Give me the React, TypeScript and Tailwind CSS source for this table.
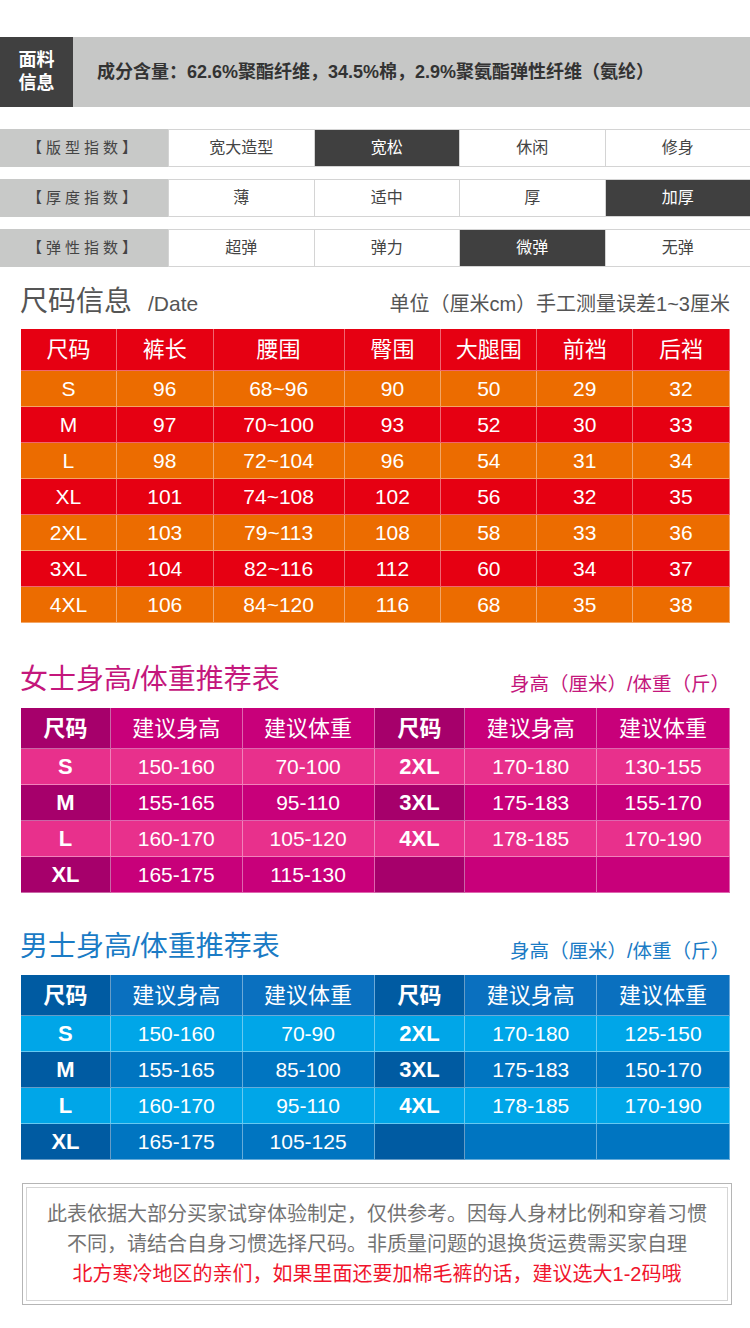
import React from "react";

const FONT = { fontFamily: '"Liberation Sans", "Noto Sans CJK SC", sans-serif' };

const indexRows = [
  { label: "【版型指数】", opts: ["宽大造型", "宽松", "休闲", "修身"], active: 1 },
  { label: "【厚度指数】", opts: ["薄", "适中", "厚", "加厚"], active: 3 },
  { label: "【弹性指数】", opts: ["超弹", "弹力", "微弹", "无弹"], active: 2 },
];

const sizeHead = ["尺码", "裤长", "腰围", "臀围", "大腿围", "前裆", "后裆"];
const sizeRows = [
  ["S", "96", "68~96", "90", "50", "29", "32"],
  ["M", "97", "70~100", "93", "52", "30", "33"],
  ["L", "98", "72~104", "96", "54", "31", "34"],
  ["XL", "101", "74~108", "102", "56", "32", "35"],
  ["2XL", "103", "79~113", "108", "58", "33", "36"],
  ["3XL", "104", "82~116", "112", "60", "34", "37"],
  ["4XL", "106", "84~120", "116", "68", "35", "38"],
];
const sizeCols = ["w-[96px]", "w-[97px]", "w-[131px]", "w-[97px]", "w-[96px]", "w-[96px]", "w-[97px]"];

const recCols = ["w-[90px]", "w-[132px]", "w-[132px]", "w-[91px]", "w-[132px]", "w-[133px]"];
const recHead = ["尺码", "建议身高", "建议体重", "尺码", "建议身高", "建议体重"];

const womenRows = [
  ["S", "150-160", "70-100", "2XL", "170-180", "130-155"],
  ["M", "155-165", "95-110", "3XL", "175-183", "155-170"],
  ["L", "160-170", "105-120", "4XL", "178-185", "170-190"],
  ["XL", "165-175", "115-130", "", "", ""],
];
const menRows = [
  ["S", "150-160", "70-90", "2XL", "170-180", "125-150"],
  ["M", "155-165", "85-100", "3XL", "175-183", "150-170"],
  ["L", "160-170", "95-110", "4XL", "178-185", "170-190"],
  ["XL", "165-175", "105-125", "", "", ""],
];

type Theme = {
  head: string;
  headSize: string;
  light: string;
  dark: string;
  darkSize: string;
};

const pink: Theme = {
  head: "bg-[#c8007a]",
  headSize: "bg-[#a6006b]",
  light: "bg-[#e8308c]",
  dark: "bg-[#c8007a]",
  darkSize: "bg-[#a6006b]",
};
const blue: Theme = {
  head: "bg-[#0a70bf]",
  headSize: "bg-[#005ba2]",
  light: "bg-[#00a6e8]",
  dark: "bg-[#0075c1]",
  darkSize: "bg-[#005ba2]",
};

function RecTable({ rows, theme }: { rows: string[][]; theme: Theme }) {
  return (
    <div className="mx-[20px] flex flex-col border-l border-t border-white/40 text-white">
      <div className="flex h-[41px]">
        {recHead.map((h, i) => (
          <div
            key={i}
            className={`${recCols[i]} ${i % 3 === 0 ? theme.headSize + " font-bold" : theme.head} flex items-center justify-center border-b border-r border-white/40 text-[22px]`}
          >
            {h}
          </div>
        ))}
      </div>
      {rows.map((r, ri) => {
        const isDark = ri % 2 === 1;
        return (
          <div key={ri} className="flex h-[36px]">
            {r.map((c, i) => {
              const bg = isDark ? (i % 3 === 0 ? theme.darkSize : theme.dark) : theme.light;
              return (
                <div
                  key={i}
                  className={`${recCols[i]} ${bg} ${i % 3 === 0 ? "font-bold text-[22px]" : "text-[21px]"} flex items-center justify-center border-b border-r border-white/40`}
                >
                  {c}
                </div>
              );
            })}
          </div>
        );
      })}
    </div>
  );
}

export default function App() {
  return (
    <div className="relative h-[1328px] w-[750px] overflow-hidden bg-white pt-[37px]" style={FONT}>
      {/* fabric info */}
      <div className="flex h-[70px]">
        <div className="flex w-[73px] flex-col items-center justify-center bg-[#404040] text-[18px] font-bold leading-[23px] text-white">
          <span>面料</span>
          <span>信息</span>
        </div>
        <div className="flex flex-1 items-center bg-[#c6c7c6] pl-[24px] text-[18px] font-bold text-[#333]">
          成分含量：62.6%聚酯纤维，34.5%棉，2.9%聚氨酯弹性纤维（氨纶）
        </div>
      </div>

      {/* index rows */}
      <div className="mt-[22px] flex flex-col gap-[12px]">
        {indexRows.map((row, ri) => (
          <div key={ri} className="flex h-[38px]">
            <div className="flex w-[168px] items-center justify-center bg-[#c8c9c8] text-[15px] tracking-[4px] text-[#444]">
              {row.label}
            </div>
            {row.opts.map((o, i) => (
              <div
                key={i}
                className={`flex flex-1 items-center justify-center border-y border-l border-[#d4d4d4] text-[16px] ${
                  i === row.active ? "bg-[#404040] text-white" : "bg-white text-[#444]"
                }`}
              >
                {o}
              </div>
            ))}
          </div>
        ))}
      </div>

      {/* size info */}
      <div className="flex h-[61px] items-center justify-between px-[20px] pt-[8px]">
        <div className="flex items-baseline gap-[16px] text-[#555]">
          <span className="text-[28px]">尺码信息</span>
          <span className="text-[21px]">/Date</span>
        </div>
        <span className="pt-[4px] text-[20px] text-[#555]">单位（厘米cm）手工测量误差1~3厘米</span>
      </div>

      <div className="mx-[20px] flex flex-col border-l border-t border-white/40 text-white">
        <div className="flex h-[42px] bg-[#e60012]">
          {sizeHead.map((h, i) => (
            <div key={i} className={`${sizeCols[i]} flex items-center justify-center border-b border-r border-white/40 text-[22px]`}>
              {h}
            </div>
          ))}
        </div>
        {sizeRows.map((r, ri) => (
          <div key={ri} className={`flex h-[36px] ${ri % 2 === 0 ? "bg-[#ec6c00]" : "bg-[#e60012]"}`}>
            {r.map((c, i) => (
              <div key={i} className={`${sizeCols[i]} flex items-center justify-center border-b border-r border-white/40 text-[21px]`}>
                {c}
              </div>
            ))}
          </div>
        ))}
      </div>

      {/* women */}
      <div className="flex h-[84px] items-end justify-between px-[20px] pb-[10px]">
        <span className="text-[28px] leading-[34px] text-[#c4177c]">女士身高/体重推荐表</span>
        <span className="text-[19.5px] leading-[26px] text-[#c4177c]">身高（厘米）/体重（斤）</span>
      </div>
      <RecTable rows={womenRows} theme={pink} />

      {/* men */}
      <div className="flex h-[81px] items-end justify-between px-[20px] pb-[10px]">
        <span className="text-[28px] leading-[34px] text-[#1a7bc5]">男士身高/体重推荐表</span>
        <span className="text-[19.5px] leading-[26px] text-[#1a7bc5]">身高（厘米）/体重（斤）</span>
      </div>
      <RecTable rows={menRows} theme={blue} />

      {/* note */}
      <div className="ml-[22px] mt-[23px] w-[710px] border border-[#b5b5b5] p-[3px]">
        <div className="flex h-[114px] flex-col items-center justify-center border border-[#d5d5d5] text-[20px] leading-[30px]">
          <p className="text-[#737373]">此表依据大部分买家试穿体验制定，仅供参考。因每人身材比例和穿着习惯</p>
          <p className="text-[#737373]">不同，请结合自身习惯选择尺码。非质量问题的退换货运费需买家自理</p>
          <p className="text-[#f0142c]">北方寒冷地区的亲们，如果里面还要加棉毛裤的话，建议选大1-2码哦</p>
        </div>
      </div>
    </div>
  );
}
